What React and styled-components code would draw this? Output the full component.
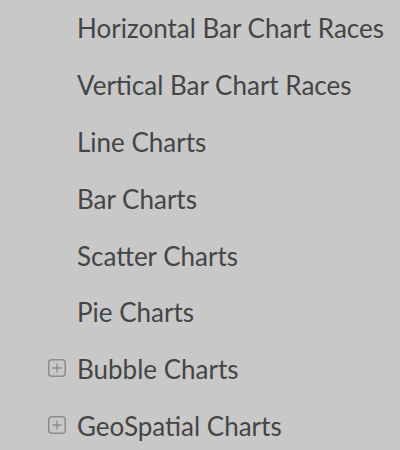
import React from 'react'
import styled, { createGlobalStyle } from 'styled-components'

const GlobalStyle = createGlobalStyle`
	html, body {
		margin: 0;
		padding: 0;
		background: #c8c8c8;
	}
	body {
		font-family: Lato, "Noto Sans", sans-serif;
	}
`

const items = [
	{ label: 'Horizontal Bar Chart Races' },
	{ label: 'Vertical Bar Chart Races' },
	{ label: 'Line Charts' },
	{ label: 'Bar Charts' },
	{ label: 'Scatter Charts' },
	{ label: 'Pie Charts' },
	{ label: 'Bubble Charts', expandable: true },
	{ label: 'GeoSpatial Charts', expandable: true },
]

const PlusBox = () => (
	<svg width="18" height="18" viewBox="0 0 18 18">
		<rect x="0.75" y="0.75" width="16.5" height="16.5" rx="3" fill="none" stroke="#8c8c8c" strokeWidth="1.5" />
		<path d="M9 4.5v9M4.5 9h9" stroke="#8c8c8c" strokeWidth="1.4" />
	</svg>
)

export default function App() {
	return (
		<React.Fragment>
			<GlobalStyle />
			<Tree>
				{items.map(item => (
					<Row key={item.label}>
						<Toggle>{item.expandable && <PlusBox />}</Toggle>
						<Label>{item.label}</Label>
					</Row>
				))}
			</Tree>
		</React.Fragment>
	)
}

const Tree = styled.ul`
	list-style: none;
	margin: 0;
	padding: 0 0 0 48px;
	height: 450px;
	overflow: hidden;
`

const Row = styled.li`
	display: flex;
	align-items: center;
	height: 56.8px;
`

const Toggle = styled.span`
	display: flex;
	align-items: center;
	width: 29px;
	flex-shrink: 0;
	margin-top: -2px;
`

const Label = styled.span`
	font-size: 26px;
	color: #454545;
	white-space: nowrap;
	line-height: 1;
`
